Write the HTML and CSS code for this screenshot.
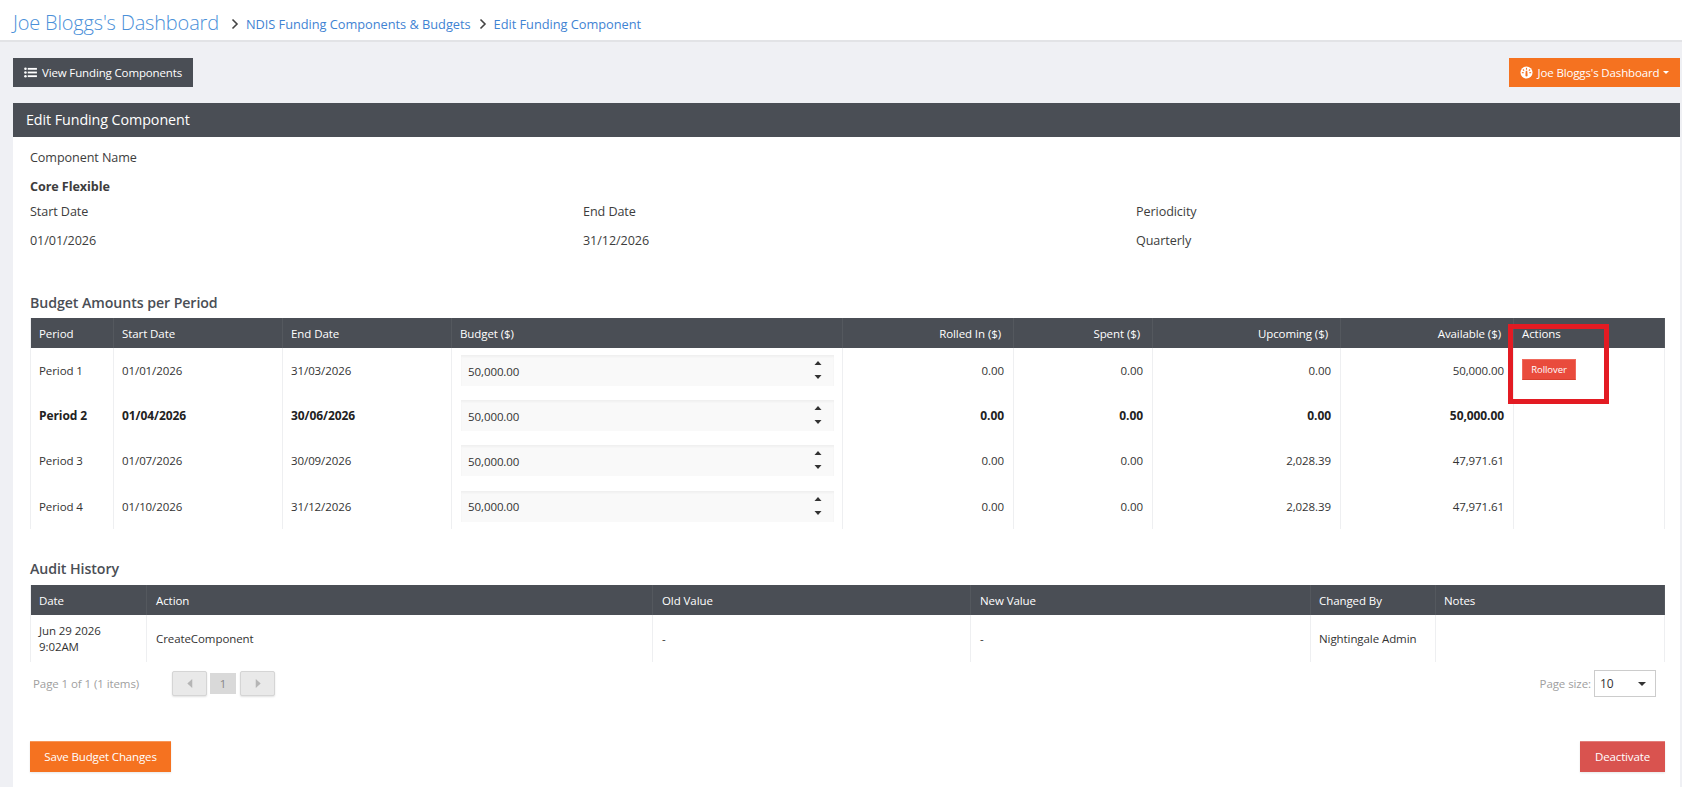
FILE: index.html
```html
<!DOCTYPE html>
<html lang="en">
<head>
<meta charset="utf-8">
<title>Edit Funding Component</title>
<link rel="stylesheet" href="styles.css">
</head>
<body>
<header class="topbar">
  <a class="brand">Joe Bloggs's Dashboard</a>
  <svg class="crumb-sep" viewBox="0 0 8 12"><path d="M1.5 1.5 6 6l-4.500 4.500" fill="none" stroke="#444" stroke-width="1.600"/></svg>
  <a class="crumb">NDIS Funding Components &amp; Budgets</a>
  <svg class="crumb-sep" viewBox="0 0 8 12"><path d="M1.5 1.5 6 6l-4.500 4.500" fill="none" stroke="#444" stroke-width="1.600"/></svg>
  <a class="crumb">Edit Funding Component</a>
</header>
<main class="page">
  <div class="toolbar">
    <button class="btn btn-dark">
      <svg class="ico" viewBox="0 0 14 12"><g fill="#fff"><circle cx="1.500" cy="2" r="1.400"/><circle cx="1.500" cy="6" r="1.400"/><circle cx="1.500" cy="10" r="1.400"/><rect x="4" y="1" width="10" height="2"/><rect x="4" y="5" width="10" height="2"/><rect x="4" y="9" width="10" height="2"/></g></svg>
      View Funding Components
    </button>
    <button class="btn btn-orange">
      <svg class="ico ico-round" viewBox="0 0 14 14"><circle cx="7" cy="7" r="6.500" fill="#fff"/><g fill="#f57220"><rect x="6.400" y="2" width="1.200" height="2"/><rect x="3.200" y="3.500" width="1.200" height="1.800" transform="rotate(-45 3.800 4.400)"/><rect x="9.600" y="3.500" width="1.200" height="1.800" transform="rotate(45 10.200 4.400)"/><rect x="2" y="6.600" width="2" height="1.200"/><rect x="10" y="6.600" width="2" height="1.200"/><path d="M6.200 5h1.600l.4 5.200a1.200 1.200 0 1 1-2.400 0z"/></g></svg>
      Joe Bloggs's Dashboard
      <span class="caret"></span>
    </button>
  </div>
  <section class="panel">
    <h1 class="panel-head">Edit Funding Component</h1>
    <div class="panel-body">
      <div class="label first">Component Name</div>
      <div class="value-strong">Core Flexible</div>
      <div class="meta-grid">
        <div>Start Date</div><div>End Date</div><div>Periodicity</div>
        <div class="meta-val">01/01/2026</div><div class="meta-val">31/12/2026</div><div class="meta-val">Quarterly</div>
      </div>

      <h2 class="section budget-title">Budget Amounts per Period</h2>
      <div class="table-wrap">
        <table class="grid budget">
          <colgroup>
            <col class="b1"><col class="b2"><col class="b3"><col class="b4"><col class="b5"><col class="b6"><col class="b7"><col class="b8"><col class="b9">
          </colgroup>
          <thead>
            <tr><th>Period</th><th>Start Date</th><th>End Date</th><th>Budget ($)</th><th class="num">Rolled In ($)</th><th class="num">Spent ($)</th><th class="num">Upcoming ($)</th><th class="num">Available ($)</th><th>Actions</th></tr>
          </thead>
          <tbody>
            <tr><td>Period 1</td><td>01/01/2026</td><td>31/03/2026</td>
              <td><div class="spin"><input class="spin-input" type="text" value="50,000.00"><span class="spin-arrows"><svg viewBox="0 0 8 20"><path d="M4 1 7.500 5h-7zM4 19 .5 15h7z" fill="#333"/></svg></span></div></td>
              <td class="num">0.00</td><td class="num">0.00</td><td class="num">0.00</td><td class="num">50,000.00</td>
              <td class="act"><button class="btn-roll">Rollover</button></td></tr>
            <tr class="current"><td>Period 2</td><td>01/04/2026</td><td>30/06/2026</td>
              <td><div class="spin"><input class="spin-input" type="text" value="50,000.00"><span class="spin-arrows"><svg viewBox="0 0 8 20"><path d="M4 1 7.500 5h-7zM4 19 .5 15h7z" fill="#333"/></svg></span></div></td>
              <td class="num">0.00</td><td class="num">0.00</td><td class="num">0.00</td><td class="num">50,000.00</td><td></td></tr>
            <tr><td>Period 3</td><td>01/07/2026</td><td>30/09/2026</td>
              <td><div class="spin"><input class="spin-input" type="text" value="50,000.00"><span class="spin-arrows"><svg viewBox="0 0 8 20"><path d="M4 1 7.500 5h-7zM4 19 .5 15h7z" fill="#333"/></svg></span></div></td>
              <td class="num">0.00</td><td class="num">0.00</td><td class="num">2,028.39</td><td class="num">47,971.61</td><td></td></tr>
            <tr><td>Period 4</td><td>01/10/2026</td><td>31/12/2026</td>
              <td><div class="spin"><input class="spin-input" type="text" value="50,000.00"><span class="spin-arrows"><svg viewBox="0 0 8 20"><path d="M4 1 7.500 5h-7zM4 19 .5 15h7z" fill="#333"/></svg></span></div></td>
              <td class="num">0.00</td><td class="num">0.00</td><td class="num">2,028.39</td><td class="num">47,971.61</td><td></td></tr>
          </tbody>
        </table>
        <div class="annotation"></div>
      </div>

      <h2 class="section audit-title">Audit History</h2>
      <table class="grid audit">
        <colgroup>
          <col class="a1"><col class="a2"><col class="a3"><col class="a4"><col class="a5"><col class="a6">
        </colgroup>
        <thead>
          <tr><th>Date</th><th>Action</th><th>Old Value</th><th>New Value</th><th>Changed By</th><th>Notes</th></tr>
        </thead>
        <tbody>
          <tr><td>Jun 29 2026<br>9:02AM</td><td>CreateComponent</td><td>-</td><td>-</td><td>Nightingale Admin</td><td></td></tr>
        </tbody>
      </table>

      <div class="pager">
        <span class="pager-info">Page 1 of 1 (1 items)</span>
        <button class="pg-btn"><svg viewBox="0 0 6 10"><path d="M5.500 0v10L0 5z" fill="#b5b5b5"/></svg></button>
        <span class="pg-num">1</span>
        <button class="pg-btn"><svg viewBox="0 0 6 10"><path d="M.5 0v10L6 5z" fill="#b5b5b5"/></svg></button>
        <span class="pg-size-label">Page size:</span>
        <div class="pg-size"><span>10</span><span class="pg-caret"></span></div>
      </div>

      <div class="actions">
        <button class="btn btn-save">Save Budget Changes</button>
        <button class="btn btn-deact">Deactivate</button>
      </div>
    </div>
  </section>
</main>
</body>
</html>
```
FILE: styles.css
```css
* { box-sizing: border-box; }
html, body { margin: 0; height: 100%; overflow: hidden; }
body {
  background: #eff0f4;
  color: #3d3d3d;
  font-family: "Open Sans", "Noto Sans", "Liberation Sans", sans-serif;
  font-size: 11.5px;
  letter-spacing: -.08px;
}
button { font-family: inherit; letter-spacing: inherit; cursor: pointer; }

.topbar {
  height: 42px;
  background: #fff;
  border-bottom: 2px solid #e2e3e6;
  display: flex;
  align-items: center;
  padding: 7px 0 0 13px;
  color: #3f83d3;
}
.brand { font-size: 20px; font-weight: 300; color: #4a90d9; margin-right: 12px; letter-spacing: -.18px; position: relative; top: -1px; }
.crumb { font-size: 12.8px; letter-spacing: -.03px; }
.crumb-sep { width: 8px; height: 12px; margin: 0 7px 0 0; flex: none; }
.crumb + .crumb-sep { margin-left: 8px; }

.page { padding: 16px 2px 0 13px; }
.toolbar { display: flex; justify-content: space-between; margin-bottom: 16px; }
.btn {
  border: 0;
  height: 29px;
  color: #fff;
  font-size: 11.5px;
  letter-spacing: -.14px;
  display: inline-flex;
  align-items: center;
  justify-content: center;
  padding: 0;
}
.btn-dark { background: #4a4e55; width: 180px; }
.btn-orange { background: #f57220; width: 171px; }
.ico { width: 13px; height: 11px; margin-right: 5px; }
.ico-round { width: 13px; height: 13px; }
.caret {
  width: 0; height: 0; margin-left: 4px;
  border-left: 3px solid transparent; border-right: 3px solid transparent; border-top: 3px solid #fff;
}

.panel { background: #fff; height: 700px; }
.panel-head {
  margin: 0;
  height: 34px;
  line-height: 33px;
  padding-left: 13px;
  background: #4a4e55;
  color: #fff;
  font-size: 14.3px;
  font-weight: 400;
}
.panel-body { padding: 0 15px 0 17px; }
.label { line-height: 18px; font-size: 12.6px; padding-top: 12px; height: 30px; }
.value-strong { font-size: 12.6px; font-weight: 700; line-height: 18px; margin-top: 11px; }
.meta-grid {
  display: grid;
  grid-template-columns: 553px 553px 1fr;
  grid-auto-rows: 18px;
  row-gap: 11px;
  margin-top: 7px;
  font-size: 12.6px;
  line-height: 18px;
}
.section { margin: 0; font-size: 14.2px; font-weight: 600; color: #4a4e55; line-height: 20px; }
.budget-title { margin-top: 43px; }
.audit-title { margin-top: 30px; }

.table-wrap { position: relative; margin-top: 5px; }
.grid {
  border-collapse: collapse;
  table-layout: fixed;
  width: 1635px;
  border-left: 1px solid #eeeff1;
  border-right: 1px solid #eeeff1;
}
.audit { margin-top: 6px; }
.grid th {
  background: #4a4e55;
  color: #fff;
  font-weight: 400;
  text-align: left;
  height: 30px;
  padding: 0 8px;
  border-right: 1px solid #54585e;
}
.audit th { padding-top: 1px; }
.grid td {
  padding: 0 8px;
  border-right: 1px solid #eeeff1;
  color: #333;
}
.grid th.num { text-align: right; padding-right: 12px; }
.grid td.num { text-align: right; padding-right: 9px; }
.budget td { height: 45px; }
.budget tbody tr:last-child td { height: 46px; }
.audit td { height: 47px; line-height: 16px; }
.audit th:nth-child(n+2):nth-child(-n+4), .audit td:nth-child(n+2):nth-child(-n+4) { padding-left: 9px; }
.grid .current td { font-weight: 700; color: #222; font-size: 12px; }

.b1 { width: 83px; } .b2 { width: 169px; } .b3 { width: 169px; } .b4 { width: 391px; }
.b5 { width: 171px; } .b6 { width: 139px; } .b7 { width: 188px; } .b8 { width: 173px; } .b9 { width: 151px; }
.a1 { width: 116px; } .a2 { width: 506px; } .a3 { width: 318px; } .a4 { width: 340px; } .a5 { width: 125px; } .a6 { width: 229px; }

.spin { position: relative; height: 31px; width: 373px; margin-left: 1px; }
.spin-input {
  width: 100%; height: 100%;
  border: 0;
  background: #f9f9f9;
  box-shadow: inset 0 2px 2px #f0f0f0;
  padding: 1px 6px 0 7px;
  font: 400 11.5px "Open Sans", "Noto Sans", sans-serif;
  letter-spacing: inherit;
  color: #333;
}
.spin-arrows { position: absolute; right: 12px; top: 5px; width: 8px; height: 20px; display: block; }
.spin-arrows svg { display: block; width: 8px; height: 20px; }

.budget td.act { vertical-align: top; padding-top: 11px; }
.btn-roll {
  display: block;
  width: 54px; height: 21px;
  padding: 0;
  background: #e94b3c;
  border: 1px solid #f0685b;
  border-bottom-color: #d8402f;
  color: #fff;
  font-size: 9.5px;
}
.annotation {
  position: absolute;
  left: 1478px; top: 6px;
  width: 101px; height: 80px;
  border: 5px solid #e31b23;
  pointer-events: none;
}

.pager { display: flex; align-items: center; height: 27px; margin-top: 8px; color: #a0a0a0; }
.pager-info { width: 139px; padding-left: 3px; flex: none; margin-right: 3px; }
.pg-btn {
  width: 35px; height: 25px;
  background: #e9e9e9;
  border: 1px solid #d5d5d5;
  border-radius: 2px;
  box-shadow: 0 1px 2px rgba(0,0,0,.12);
  padding: 0;
  display: flex; align-items: center; justify-content: center;
}
.pg-btn svg { width: 6px; height: 9px; }
.pg-num {
  width: 26px; height: 21px; margin: 0 4px 0 3px;
  background: #d9d9d9;
  text-align: center; line-height: 21px; color: #888;
}
.pg-size-label { margin-left: auto; margin-right: 3px; }
.pg-size {
  width: 62px; height: 27px;
  border: 1px solid #ccc;
  margin-right: 9px;
  color: #333;
  display: flex; align-items: center; justify-content: space-between;
  padding: 0 9px 0 5px;
  font-size: 12px;
}
.pg-caret { border-left: 4px solid transparent; border-right: 4px solid transparent; border-top: 4px solid #333; }

.actions { display: flex; justify-content: space-between; margin-top: 44px; }
.btn-save, .btn-deact { height: 31px; box-shadow: inset 0 1px 0 rgba(255,255,255,.25), 0 1px 2px rgba(0,0,0,.1); }
.btn-save { width: 141px; background: #f57220; }
.btn-deact { width: 85px; background: #d9534f; }
```
